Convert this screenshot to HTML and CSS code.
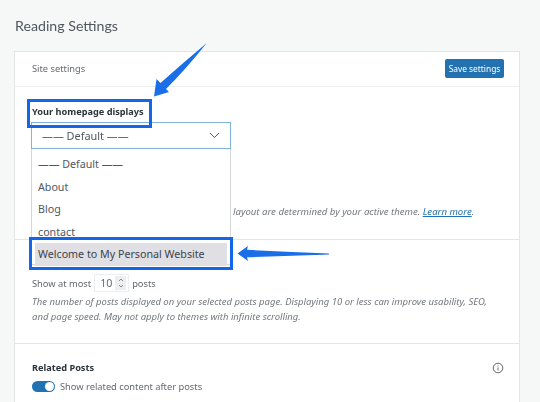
FILE: index.html
```html
<!DOCTYPE html>
<html lang="en">
<head>
<meta charset="utf-8">
<title>Reading Settings</title>
<link rel="stylesheet" href="styles.css">
</head>
<body>
<main class="page">
  <h1 class="title">Reading Settings</h1>
  <section class="card">
    <header class="card-head">
      <span class="card-name">Site settings</span>
      <button class="save" type="button">Save settings</button>
    </header>
    <div class="block block-home">
      <div class="label">Your homepage displays</div>
      <div class="select">
        <span>—— Default ——</span>
        <svg class="chev" width="11" height="7" viewBox="0 0 11 7"><path d="M1 1l4.500 4.500L10 1" fill="none" stroke="#50575e" stroke-width="1"/></svg>
      </div>
      <p class="hint">layout are determined by your active theme. <a href="#">Learn more</a>.</p>
    </div>
    <div class="block block-posts">
      <div class="row">
        <span>Show at most</span>
        <span class="num"><span>10</span>
          <span class="spin"><svg width="6" height="12" viewBox="0 0 6 12"><path d="M1 4 3 2l2 2M1 8l2 2 2-2" fill="none" stroke="#6d7278" stroke-width=".8"/></svg></span>
        </span>
        <span>posts</span>
      </div>
      <p class="desc">The number of posts displayed on your selected posts page. Displaying 10 or less can improve usability, SEO, and page speed. May not apply to themes with infinite scrolling.</p>
    </div>
    <div class="block block-related">
      <div class="related-head">
        <div class="label">Related Posts</div>
        <svg width="12" height="12" viewBox="0 0 12 12"><circle cx="6" cy="6" r="4.800" fill="none" stroke="#50575e" stroke-width=".9"/><path d="M6 5.400v3M6 3.400v1" stroke="#50575e" stroke-width=".9"/></svg>
      </div>
      <div class="toggle-row">
        <span class="toggle"><span class="knob"></span></span>
        <span>Show related content after posts</span>
      </div>
    </div>
  </section>
</main>

<ul class="menu">
  <li>—— Default ——</li>
  <li>About</li>
  <li>Blog</li>
  <li>contact</li>
  <li class="picked">Welcome to My Personal Website</li>
</ul>
<div class="mark mark-label"></div>
<div class="mark mark-option"></div>
<svg class="arrows" width="540" height="402" viewBox="0 0 540 402">
  <path d="M206.700 43 Q187 68 166 89 L169 92 154 96.500 156.500 79 160.500 83 Q184 62 206.700 43Z" fill="#1a6fe8"/>
  <path d="M237.500 253.500 248 246 247 249.800 Q290 252 329 253.500 L329 254.500 Q290 256 247 257.200 L248 261Z" fill="#1a6fe8"/>
</svg>
</body>
</html>
```

FILE: styles.css
```css
* { box-sizing: border-box; }
html, body { margin: 0; height: 100%; }
body {
  position: relative;
  width: 540px;
  height: 402px;
  overflow: hidden;
  background: #f6f7f7;
  color: #50575e;
  font-family: "Noto Sans", "Open Sans", sans-serif;
  font-size: 9.300px;
  filter: blur(.4px);
}
.page { padding: 16px 20px 0 14px; }
.title {
  margin: 0 0 15px 1px;
  font-family: Lato, "Noto Sans", sans-serif;
  font-size: 14.200px;
  line-height: 20px;
  font-weight: 400;
  color: #50575e;
}
.card {
  background: #fff;
  border: 1px solid #e3e5e7;
  border-bottom: 0;
  height: 360px;
}
.card-head {
  height: 35px;
  display: flex;
  align-items: center;
  justify-content: space-between;
  padding: 0 15px 1px 17px;
  border-bottom: 1px solid #eceeef;
}
.card-name { color: #646970; }
.save {
  width: 59px;
  height: 19px;
  padding: 0;
  border: 0;
  border-radius: 2px;
  background: #2271b1;
  color: #fff;
  font: 8.400px "Noto Sans", sans-serif;
}
.block { padding: 0 16px; border-bottom: 1px solid #e3e5e7; }
.block-home { height: 153px; padding-top: 17px; }
.label { padding-left: 1px; font-weight: 700; font-size: 9.200px; line-height: 16px; color: #2c3338; }
.select {
  width: 200px;
  height: 27px;
  margin-top: 2px;
  padding: 0 10px;
  display: flex;
  align-items: center;
  justify-content: space-between;
  border: 1px solid #7fb6d6;
  font-size: 10.900px;
  color: #50575e;
}
.hint { margin: 55px 0 0; padding-left: 202px; font-style: italic; font-size: 9.600px; line-height: 15px; color: #73787d; white-space: nowrap; }
.hint a { color: #2271b1; }
.block-posts { height: 104px; padding-top: 34px; }
.row { display: flex; align-items: center; gap: 3px; height: 18px; padding-left: 1px; color: #646970; }
.num {
  width: 35px;
  height: 18px;
  padding-left: 5px;
  display: flex;
  align-items: center;
  justify-content: space-between;
  border: 1px solid #eceeef;
  font-size: 10.700px;
}
.spin { width: 11px; height: 14px; margin-right: 2px; background: #eceeef; display: flex; align-items: center; justify-content: center; }
.desc { margin: 2px 0 0; padding-left: 1px; max-width: 476px; font-style: italic; font-size: 9.500px; line-height: 15px; color: #73787d; }
.block-related { border: 0; padding-top: 16px; padding-right: 15px; }
.related-head { display: flex; align-items: center; justify-content: space-between; }
.toggle-row { display: flex; align-items: center; gap: 5px; margin-top: 4px; padding-left: 1px; color: #646970; }
.toggle { width: 23px; height: 11px; padding: 1px; border-radius: 6px; background: #2271b1; display: flex; justify-content: flex-end; }
.knob { width: 9px; height: 9px; border-radius: 50%; background: #fff; }

/* dropdown overlay */
.menu {
  position: absolute;
  left: 31px;
  top: 149px;
  width: 200px;
  height: 116px;
  margin: 0;
  padding: 4px 3px 0;
  list-style: none;
  background: #fff;
  border: 1px solid #d5d7d9;
  border-top: 0;
  font-size: 10.700px;
  color: #50575e;
}
.menu li { height: 22.500px; line-height: 22px; padding-left: 3px; }
.picked { background: #dfdfe4; color: #3c434a; }

/* annotation overlays */
.mark { position: absolute; border: 3px solid #1565e8; }
.mark-label { left: 27px; top: 99px; width: 125px; height: 29px; }
.mark-option { left: 29px; top: 237px; width: 204px; height: 33px; }
.arrows { position: absolute; left: 0; top: 0; pointer-events: none; }
```
